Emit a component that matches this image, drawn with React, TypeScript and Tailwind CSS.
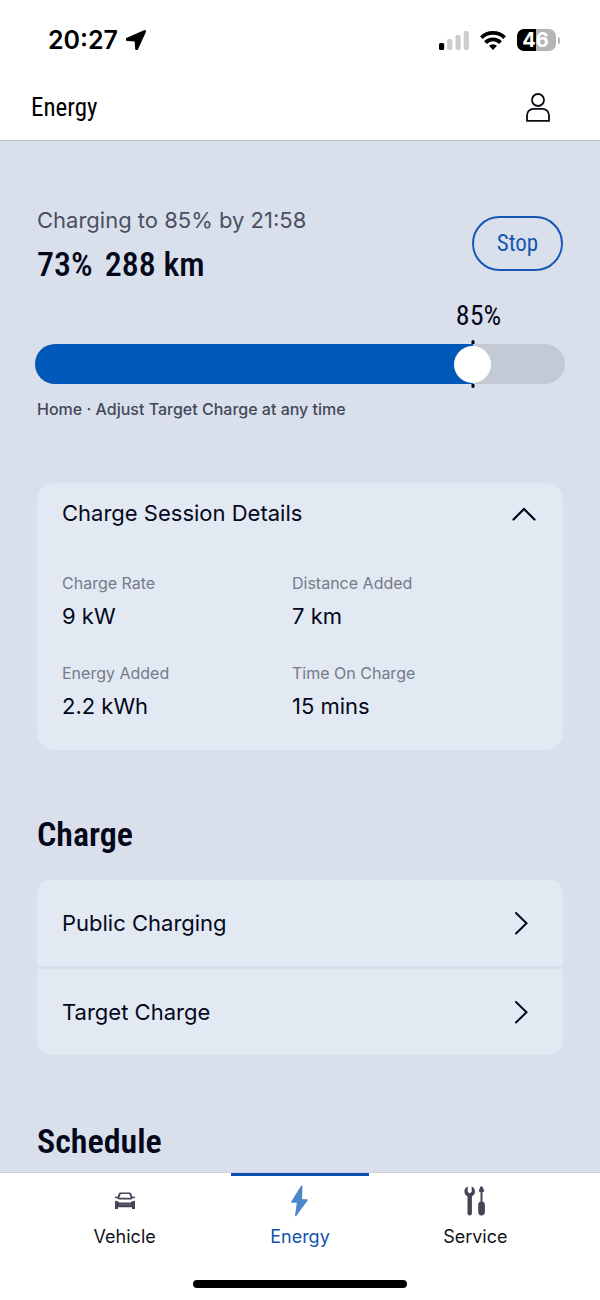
import React, { useState } from 'react';

const condensed = "font-['Roboto_Condensed',Roboto,sans-serif]";

const StatusBar = () => {
  return <div className="flex h-20 items-center justify-between pl-12 pr-10 text-black">
      <div className="flex items-center gap-2">
        <span className="text-[25px] leading-8 font-semibold">20:27</span>
        <svg width="20" height="20" viewBox="0 0 20 20" fill="currentColor" stroke="currentColor" strokeWidth="1.500" strokeLinejoin="round" aria-hidden="true">
          <path d="M18.300.9 1.200 8.500C.2 9 .4 10.200 1.300 10.300l7.500.5c.4 0 .6.200.6.600l.5 7.200c.1 1 1.200 1.100 1.600.200L19.200 1.800C19.500 1.100 19 .6 18.300.9z" />
        </svg>
      </div>
      <div className="flex items-center gap-[11px]">
        <svg width="30" height="19" viewBox="0 0 30 19" aria-hidden="true">
          <rect x="0" y="12" width="5.200" height="7" rx="1.500" fill="#000" />
          <rect x="8.200" y="8" width="5.200" height="11" rx="1.500" fill="#cdcdcd" />
          <rect x="16.500" y="4" width="5.200" height="15" rx="1.500" fill="#cdcdcd" />
          <rect x="24.700" y="0" width="5.200" height="19" rx="1.500" fill="#cdcdcd" />
        </svg>
        <svg width="26" height="19" viewBox="0 0 26 19" fill="none" stroke="#000" strokeWidth="3.800" aria-hidden="true">
          <path d="M1.400 6.700a16.500 16.500 0 0 1 23.200 0" />
          <path d="M5.500 11.600a10.400 10.400 0 0 1 15 0" />
          <path d="M13 19l-4-4.200a5.700 5.700 0 0 1 8 0z" fill="#000" stroke="none" />
        </svg>
        <div className="flex items-center gap-0.5">
          <span className="flex h-[22px] w-[39px] items-center justify-center rounded-[7px] bg-linear-to-r from-black from-48% to-[#b5b5b5] to-48% pr-0.5 text-xl leading-5 font-bold text-white">
            46
          </span>
          <span className="h-[7px] w-0.5 rounded-r bg-[#b5b5b5]" />
        </div>
      </div>
    </div>;
};

const Header = () => {
  return <header className="flex h-[61px] items-start justify-between border-b border-[#b9bfca] pt-2 pl-[31px] pr-[50px]">
      <h1 className={`${condensed} text-[25px] leading-10 text-black`}>Energy</h1>
      <button type="button" aria-label="Account" className="pt-[5px]">
        <svg width="24" height="29" viewBox="0 0 24 29" fill="none" stroke="#0b0d14" strokeWidth="1.800">
          <circle cx="12" cy="7" r="6" />
          <path d="M1 27.800v-5.300c0-4 3-6.700 6.500-6.700h9c3.500 0 6.500 2.700 6.500 6.700v5.300z" />
        </svg>
      </button>
    </header>;
};

const TargetSlider = () => {
  const [target, setTarget] = useState(85);
  // the thumb is 37px wide, so its centre travels 18.5px short of each end
  const centre = `calc(${target}% + ${(50 - target) * 0.37}px)`;
  return <div className="-mx-0.5">
      <div className="relative h-8">
        <label htmlFor="target" className={`${condensed} absolute -translate-x-1/2 pl-3 text-[28px] leading-8 text-[#05081a]`} style={{ left: centre }}>
          {target}%
        </label>
      </div>
      <div className="relative mt-3 h-10">
        <span className="absolute -top-1 -bottom-1 w-[3px] -translate-x-1/2 rounded-full bg-[#05081a]" style={{ left: centre }} />
        <input id="target" type="range" min={0} max={100} value={target} onChange={e => setTarget(Number(e.target.value))} style={{ backgroundImage: `linear-gradient(to right, #0058b8 ${centre}, #c3c9d5 ${centre})` }} className="relative block h-10 w-full cursor-pointer appearance-none rounded-full [&::-webkit-slider-thumb]:size-[37px] [&::-webkit-slider-thumb]:appearance-none [&::-webkit-slider-thumb]:rounded-full [&::-webkit-slider-thumb]:bg-white" />
      </div>
    </div>;
};

const details = [
  { label: 'Charge Rate', value: '9 kW' },
  { label: 'Distance Added', value: '7 km' },
  { label: 'Energy Added', value: '2.2 kWh' },
  { label: 'Time On Charge', value: '15 mins' }
];

const SessionDetails = () => {
  const [isOpen, setIsOpen] = useState(true);
  return <section className="mt-16 rounded-[18px] bg-[#e2e9f3] px-[25px] pt-3 pb-7">
      <button type="button" aria-expanded={isOpen} onClick={() => setIsOpen(!isOpen)} className="flex w-full items-center justify-between pr-0.5 text-[22px] leading-9 text-[#05081a]">
        Charge Session Details
        <svg width="24" height="15" viewBox="0 0 24 15" fill="none" stroke="currentColor" strokeWidth="2.200" strokeLinecap="round" className={isOpen ? '' : 'rotate-180'}>
          <path d="M1.500 13.500 12 3l10.500 10.500" />
        </svg>
      </button>
      {isOpen && <dl className="mt-10 grid grid-cols-[230px_1fr] gap-y-[29px]">
          {details.map(item => <div key={item.label}>
              <dt className="text-base leading-6 text-[#757b88]">{item.label}</dt>
              <dd className="mt-[5px] text-[22px] leading-8 text-[#05081a]">{item.value}</dd>
            </div>)}
        </dl>}
    </section>;
};

const LinkRow = ({ children }: { children: React.ReactNode }) => {
  return <a href="#" className="flex h-[86px] items-center justify-between bg-[#e2e9f3] pl-[25px] pr-[35px] text-[22px] leading-8 text-[#05081a]">
      {children}
      <svg width="14" height="24" viewBox="0 0 14 24" fill="none" stroke="currentColor" strokeWidth="2" strokeLinecap="round">
        <path d="M2 2 12.500 12.200 2 22.500" />
      </svg>
    </a>;
};

const CarIcon = () => <svg width="22" height="18" viewBox="0 0 22 18" fill="#454456">
    <path fillRule="evenodd" d="M6.500.5h9c.8 0 1.300.3 1.600 1l1.400 3.200h2.300c.6 0 .8 1-.1 1.200l-2.400.5-1.200 1.100H4.900L3.700 6.400 1.300 5.900C.4 5.700.6 4.700 1.200 4.700h2.300l1.400-3.200c.3-.7.8-1 1.600-1zM6.700 2 5.300 5.700h11.400L15.300 2z" />
    <path d="M1.700 8.800c2 .3 3 .8 3.500 1.700h11.600c.5-.9 1.500-1.400 3.500-1.700.5 0 .7.300.7.700v7.500h-3v-1.800H4V17H1V9.500c0-.4.200-.7.700-.7z" />
    <path d="M5 12.500h12" stroke="#77798a" strokeWidth=".7" />
  </svg>;

const BoltIcon = () => <svg width="17" height="32" viewBox="0 0 17 32" fill="#4a88c9" stroke="#4a88c9" strokeWidth="1.500" strokeLinejoin="round">
    <path d="M10.700 1.200 1 17h5.700L4.700 30.500 16 15h-5.700z" />
  </svg>;

const ToolsIcon = () => <svg width="22" height="30" viewBox="0 0 22 30" fill="#454456">
    <path d="M3.700.5v5.200l2 1.700 2-1.700V.5c2 .9 3.300 2.700 3.300 5 0 2.200-1.300 4-3.100 4.800v17c0 1.300-1 2.200-2.200 2.200s-2.200-.9-2.200-2.200v-17C1.700 9.500.4 7.700.4 5.500c0-2.300 1.300-4.100 3.300-5z" />
    <path d="M16.500.5h1.900l2 4.700-1.900 1.100v9.200c1.500.5 2.400 1.500 2.400 3v7.500c0 2.200-1.400 3.500-3.400 3.500s-3.300-1.300-3.300-3.500v-7.500c0-1.500.9-2.500 2.300-3V6.300l-1.900-1.100z" />
  </svg>;

const tabs = [
  { name: 'Vehicle', icon: <CarIcon /> },
  { name: 'Energy', icon: <BoltIcon /> },
  { name: 'Service', icon: <ToolsIcon /> }
];

const TabBar = () => {
  return <nav className="sticky bottom-0 z-10 border-t border-[#cbd0da] bg-white pb-3">
      <div className="grid grid-cols-3 px-[37px]">
        {tabs.map(tab => {
          const isActive = tab.name === 'Energy';
          return <a key={tab.name} href="#" aria-current={isActive ? 'page' : undefined} className={isActive ? 'flex flex-col items-center text-[#1453ae]' : 'flex flex-col items-center text-[#111319]'}>
              <span className={isActive ? 'h-[3px] w-[138px] bg-[#0b50ae]' : 'h-[3px]'} />
              <span className="mt-[9px] flex h-8 items-center">{tab.icon}</span>
              <span className="mt-2 text-lg leading-6">{tab.name}</span>
            </a>;
        })}
      </div>
      <div className="mx-auto mt-[31px] h-2 w-[214px] rounded-full bg-black" />
    </nav>;
};

export default function App() {
  return <div className="flex min-h-screen flex-col bg-white font-[Inter,sans-serif]">
      <StatusBar />
      <Header />
      <main className="flex-1 bg-[#d9e0ec] px-[37px] pt-[67px]">
        <section>
          <div className="flex items-start justify-between">
            <div>
              <p className="text-[22px] leading-6 text-[#4a5060]">Charging to 85% by 21:58</p>
              <p className={`${condensed} mt-3 flex gap-3 text-[34px] leading-10 font-medium text-[#05081a]`}>
                <span>73%</span>
                <span>288 km</span>
              </p>
            </div>
            <button type="button" className={`${condensed} mt-2 h-[55px] w-[91px] rounded-full border-2 border-[#1458b4] text-[23px] leading-8 text-[#1458b4]`}>
              Stop
            </button>
          </div>
          <div className="mt-4">
            <TargetSlider />
          </div>
          <p className="mt-[15px] text-base leading-5 font-medium text-[#424858]">Home · Adjust Target Charge at any time</p>
        </section>
        <SessionDetails />
        <section className="mt-16">
          <h2 className={`${condensed} text-[34px] leading-10 font-semibold text-[#05081a]`}>Charge</h2>
          <div className="mt-[26px] flex flex-col gap-[3px] overflow-hidden rounded-[14px]">
            <LinkRow>Public Charging</LinkRow>
            <LinkRow>Target Charge</LinkRow>
          </div>
        </section>
        <section className="mt-[66px]">
          <h2 className={`${condensed} text-[34px] leading-10 font-semibold text-[#05081a]`}>Schedule</h2>
        </section>
      </main>
      <TabBar />
    </div>;
}
